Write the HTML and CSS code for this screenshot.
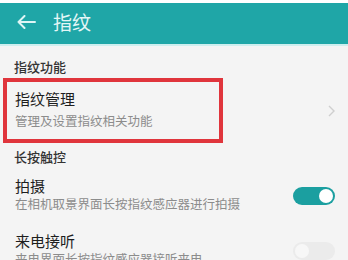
FILE: index.html
```html
<!DOCTYPE html>
<html lang="zh-CN">
<head>
<meta charset="utf-8">
<link rel="stylesheet" href="styles.css">
</head>
<body>
<div class="status"></div>
<header class="appbar">
  <svg class="back" width="20" height="14" viewBox="0 0 20 14"><path d="M19 7H2.5M8.5 1L2.5 7l6 6" fill="none" stroke="#dff5f5" stroke-width="2" stroke-linecap="round" stroke-linejoin="round"/></svg>
  <span class="title">指纹</span>
</header>
<div class="appbar-line"></div>
<main class="content">
  <div class="label first">指纹功能</div>
  <div class="item nav">
    <div class="mark">
      <div class="t">指纹管理</div>
      <div class="s">管理及设置指纹相关功能</div>
    </div>
    <svg class="chev" width="7" height="12" viewBox="0 0 7 12"><path d="M1 1l5 5-5 5" fill="none" stroke="#cfcfcf" stroke-width="1.4"/></svg>
  </div>
  <div class="label second">长按触控</div>
  <div class="item">
    <div class="text">
      <div class="t">拍摄</div>
      <div class="s">在相机取景界面长按指纹感应器进行拍摄</div>
    </div>
    <div class="toggle on"><span class="knob"></span></div>
  </div>
  <div class="item">
    <div class="text">
      <div class="t">来电接听</div>
      <div class="s">来电界面长按指纹感应器接听来电</div>
    </div>
    <div class="toggle off"><span class="knob"></span></div>
  </div>
</main>
</body>
</html>
```
FILE: styles.css
```css
* { box-sizing: border-box; margin: 0; padding: 0; }
html, body { width: 348px; height: 260px; overflow: hidden; }
body {
  background: #f4f4f4;
  font-family: "Noto Sans CJK SC", "Noto Sans", sans-serif;
  color: #222;
}
.status { height: 3px; background: #ffffff; }
.appbar {
  height: 41px;
  background: #1fa6a7;
  display: flex;
  align-items: center;
  padding-left: 16px;
  padding-bottom: 3px;
}
.back { display: block; }
.title {
  margin-left: 17px;
  font-size: 19px;
  line-height: 22px;
  color: #e4f6f6;
}
.appbar-line { height: 2px; background: #cdeeee; }
.content { display: flex; flex-direction: column; }
.label {
  font-size: 13px;
  line-height: 16px;
  color: #333;
  padding-left: 14px;
  font-weight: 500;
}
.label.first { padding-top: 13px; padding-bottom: 3px; }
.label.second { padding-top: 6px; padding-bottom: 1px; }
.item {
  display: flex;
  align-items: center;
  padding: 11px 13px 9px 15px;
}
.item.nav { padding: 0 13px 0 3px; }
.mark {
  width: 220px;
  border: 4px solid #e0353c;
  padding: 7px 0 10px 8px;
  margin-right: auto;
}
.text { margin-right: auto; }
.t { font-size: 15px; line-height: 18px; color: #1e1e1e; }
.mark .t { line-height: 20px; }
.s { font-size: 12.5px; line-height: 16px; color: #8c8c8c; margin-top: 1px; }
.mark .s { margin-top: 4px; }
.chev { display: block; margin-right: 0; }
.toggle {
  width: 42px;
  height: 18px;
  border-radius: 9px;
  position: relative;
  margin-top: 3px;
}
.toggle.on { background: #1b9fa0; }
.toggle.off { background: #ebebeb; }
.knob {
  position: absolute;
  top: 2px;
  width: 14px;
  height: 14px;
  border-radius: 50%;
  background: #ffffff;
}
.toggle.on .knob { right: 2px; }
.toggle.off .knob { left: 2px; background: #f7f7f7; }
```
